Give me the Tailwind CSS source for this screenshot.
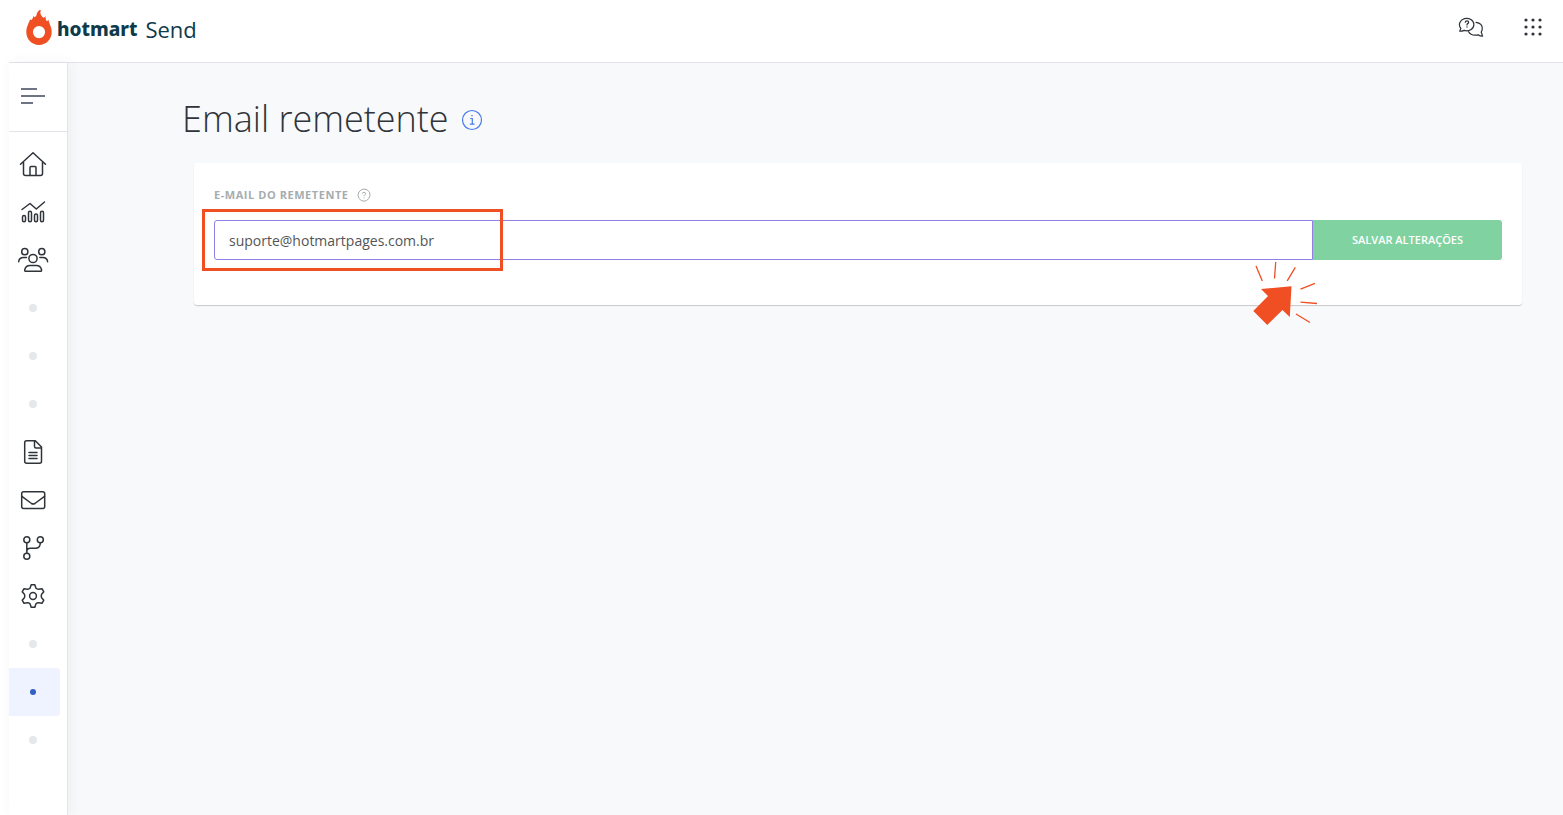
<!DOCTYPE html>
<html lang="pt-BR">
  <head>
    <meta charset="UTF-8" />
    <meta name="viewport" content="width=device-width, initial-scale=1.0" />
    <title>Hotmart Send - Email remetente</title>
    <script src="https://cdn.jsdelivr.net/npm/@tailwindcss/browser@4"></script>
  </head>

  <body class="min-h-screen flex flex-col pl-[9px] bg-white text-[#2f343a] font-['Open_Sans',sans-serif]">
    <!-- Header -->
    <header class="flex h-[63px] items-center justify-between border-b border-[#e3e4ea] pl-4 pr-5">
      <a href="#" class="flex items-center -mt-1 text-[#0e3a4a]" aria-label="hotmart Send">
        <svg class="w-7 h-9 -mt-1" viewBox="25 8 28 36" fill="none">
          <path fill="#f04e23" fill-rule="evenodd" d="M39.500 9C37.500 10.500 36.500 12.500 36.300 15L34.500 16.200L33.500 14.800C33.200 16.500 32.700 17.700 31.500 19L30 18.500C29.500 21 26.300 25.500 26.300 31C26.300 38 31.500 43.900 39 43.900C46.500 43.900 51.700 38 51.700 31C51.700 26 49.500 23.500 48.500 19L47 20.200C45.700 19 45.500 17.500 45.600 15.200L43.500 17C41 14.500 39.400 12 41 9.200ZM39 25A6.100 6.100 0 1 1 39 37.200A6.100 6.100 0 1 1 39 25Z" />
        </svg>
        <span class="ml-1 text-[19px] leading-7 font-extrabold font-['Noto_Sans',sans-serif]">hotmart</span>
        <span class="ml-2 text-[22px] leading-7 font-normal">Send</span>
      </a>
      <div class="flex items-center gap-[39px] -mt-2">
        <button type="button" aria-label="Ajuda">
          <svg class="w-[26px] h-6" viewBox="1458 15 26 24" fill="none" stroke="#2f343a" stroke-width="1.2" stroke-linejoin="round" stroke-linecap="round">
            <path d="M1459.700 31.200L1460.900 28.300A7.200 6.200 0 1 1 1464.200 30.400Q1462 31.400 1459.700 31.200Z" />
            <path d="M1476 22.300Q1482.500 23.300 1482.300 28.500Q1482.200 30.500 1481.200 32L1482.600 36.200Q1480 36.300 1478.200 34.800Q1471 36.300 1468.600 31.700" />
            <path d="M1465.300 22.100Q1465.500 20.800 1467 20.800T1468.600 22.300Q1468.600 23.200 1467.600 23.600Q1467 23.900 1467 24.900M1467 26.800V27" stroke-width="1.300" />
          </svg>
        </button>
        <button type="button" aria-label="Aplicativos">
          <svg class="w-5 h-5" viewBox="0 0 20 20" fill="#2f343a">
            <circle cx="3" cy="3" r="1.600" /><circle cx="10" cy="3" r="1.600" /><circle cx="17" cy="3" r="1.600" />
            <circle cx="3" cy="10" r="1.600" /><circle cx="10" cy="10" r="1.600" /><circle cx="17" cy="10" r="1.600" />
            <circle cx="3" cy="17" r="1.600" /><circle cx="10" cy="17" r="1.600" /><circle cx="17" cy="17" r="1.600" />
          </svg>
        </button>
      </div>
    </header>

    <div class="flex flex-1">
      <!-- Sidebar -->
      <aside class="relative w-[59px] shrink-0 border-r border-[#e3e4ea] bg-white shadow-[2px_0_12px_rgba(50,60,90,0.06)]">
        <button type="button" aria-label="Menu" class="flex w-full h-[69px] items-center border-b border-[#e3e4ea] pl-3 pb-[2px]">
          <svg class="w-6 h-4" viewBox="0 0 24 16" fill="#6f7482">
            <rect width="16" height="2" /><rect y="7" width="24" height="2" /><rect y="14" width="12" height="2" />
          </svg>
        </button>
        <nav class="flex flex-col pt-2 pr-[7px]">
          <a href="#" aria-label="Início" class="flex h-12 items-center justify-center pr-1">
            <svg class="w-8 h-8" viewBox="0 0 32 32" fill="none" stroke="#2f343a" stroke-width="1.500" stroke-linecap="round" stroke-linejoin="round">
              <path d="M3.500 16.200L16 4.800L28.500 16.200M6.500 13.800V25.500Q6.500 27.500 8.500 27.500H23.500Q25.500 27.500 25.500 25.500V13.800M13 27.300V19.500Q13 18.500 14 18.500H18Q19 18.500 19 19.500V27.300" />
            </svg>
          </a>
          <a href="#" aria-label="Relatórios" class="flex h-12 items-center justify-center pr-1">
            <svg class="w-8 h-8" viewBox="0 0 32 32" fill="none" stroke="#2f343a" stroke-width="1.500" stroke-linecap="round" stroke-linejoin="round">
              <path d="M5 13.500L13 7.500L19.300 13L27.500 6" />
              <rect x="5.500" y="19.500" width="3" height="6.300" rx="1.500" /><rect x="11.500" y="15.300" width="3" height="10.500" rx="1.500" />
              <rect x="17.500" y="18" width="3" height="7.800" rx="1.500" /><rect x="23.500" y="15.300" width="3" height="10.500" rx="1.500" />
            </svg>
          </a>
          <a href="#" aria-label="Contatos" class="flex h-12 items-center justify-center pr-1">
            <svg class="w-8 h-8" viewBox="0 0 32 32" fill="none" stroke="#2f343a" stroke-width="1.500" stroke-linecap="round" stroke-linejoin="round">
              <circle cx="7.800" cy="7.700" r="3.100" /><circle cx="24.800" cy="7.700" r="3.100" /><circle cx="16" cy="14.500" r="4.100" />
              <path d="M1.700 17.800Q2 13.500 6.500 13.500H9.500M22.800 13.500H25.800Q30.200 13.500 30.600 17.800M7.700 26Q8.500 21.500 13 21.500H19.300Q23.800 21.500 24.600 26Q24.700 27.300 23.500 27.300H8.800Q7.600 27.300 7.700 26Z" />
            </svg>
          </a>
          <a href="#" class="flex h-12 items-center justify-center pr-1" aria-label="Item"><span class="size-2 rounded-full bg-[#e5e8eb]"></span></a>
          <a href="#" class="flex h-12 items-center justify-center pr-1" aria-label="Item"><span class="size-2 rounded-full bg-[#e5e8eb]"></span></a>
          <a href="#" class="flex h-12 items-center justify-center pr-1" aria-label="Item"><span class="size-2 rounded-full bg-[#e5e8eb]"></span></a>
          <a href="#" aria-label="Formulários" class="flex h-12 items-center justify-center pr-1">
            <svg class="w-8 h-8" viewBox="0 0 32 32" fill="none" stroke="#2f343a" stroke-width="1.500" stroke-linecap="round" stroke-linejoin="round">
              <path d="M9.500 4.700H18.300L24.500 11V25.300Q24.500 27.300 22.500 27.300H9.700Q7.700 27.300 7.700 25.300V6.700Q7.700 4.700 9.500 4.700ZM17.500 4.900V10.500Q17.500 12 19 12H24.300M12 16.500H20M12 19.500H20M12 22.500H20" />
            </svg>
          </a>
          <a href="#" aria-label="E-mails" class="flex h-12 items-center justify-center pr-1">
            <svg class="w-8 h-8" viewBox="0 0 32 32" fill="none" stroke="#2f343a" stroke-width="1.500" stroke-linecap="round" stroke-linejoin="round">
              <rect x="4.700" y="7.700" width="23" height="16.800" rx="2" />
              <path d="M4.900 12.300L14.500 19.500Q16.200 20.600 17.900 19.500L27.500 12.300" />
            </svg>
          </a>
          <a href="#" aria-label="Automações" class="flex h-12 items-center justify-center pr-1">
            <svg class="w-8 h-8" viewBox="0 0 32 32" fill="none" stroke="#2f343a" stroke-width="1.500" stroke-linecap="round" stroke-linejoin="round">
              <circle cx="9.800" cy="7.700" r="3" /><circle cx="23.300" cy="7.700" r="3" /><circle cx="9.800" cy="24.200" r="3" />
              <path d="M9.800 10.700V21.200M9.800 19.800Q9.800 16.200 13.300 16.200H19Q23.300 15.800 23.300 10.700" />
            </svg>
          </a>
          <a href="#" aria-label="Configurações" class="flex h-12 items-center justify-center pr-1">
            <svg class="w-8 h-8" viewBox="0 0 32 32" fill="none" stroke="#2f343a" stroke-width="1.500" stroke-linecap="round" stroke-linejoin="round">
              <circle cx="16" cy="16" r="3.400" />
              <path d="M14.200 4.700H17.800L19 8.300Q20.300 9.400 21.600 9.200L25 8.700L26.800 11.800L24.600 14.300Q23.800 16 24.600 17.700L26.800 20.200L25 23.300L21.600 22.800Q20.300 22.600 19 23.700L17.800 27.300H14.200L13 23.700Q11.700 22.600 10.400 22.800L7 23.300L5.200 20.200L7.400 17.700Q8.200 16 7.400 14.300L5.200 11.800L7 8.700L10.400 9.200Q11.700 9.400 13 8.300Z" />
            </svg>
          </a>
          <a href="#" class="flex h-12 items-center justify-center pr-1" aria-label="Item"><span class="size-2 rounded-full bg-[#e5e8eb]"></span></a>
          <a href="#" class="flex h-12 items-center justify-center pr-1 rounded-r-[3px] bg-[#eff3ff]" aria-label="Email remetente" aria-current="page"><span class="size-[6px] rounded-full bg-[#3360c4]"></span></a>
          <a href="#" class="flex h-12 items-center justify-center pr-1" aria-label="Item"><span class="size-2 rounded-full bg-[#e5e8eb]"></span></a>
        </nav>
      </aside>

      <!-- Content -->
      <main class="flex-1 min-w-0 bg-[#f8f9fb] pl-[114px] pr-[41px] pt-8">
        <div class="flex items-center gap-3">
          <h1 class="text-[36px] leading-[48px] font-light">Email remetente</h1>
          <button type="button" aria-label="Informações" class="pt-[2px]">
            <svg class="w-[22px] h-[22px]" viewBox="0 0 22 22" fill="none" stroke="#4a7bea" stroke-width="1.200">
              <circle cx="11" cy="11" r="9.500" />
              <path d="M9.200 9.500H11.300V15M8.800 15.200H13.600M10.300 6.700H11.700" />
            </svg>
          </button>
        </div>

        <section class="relative ml-3 mt-5 h-[142px] rounded-[3px] bg-white px-5 pt-6 shadow-[0_1px_1px_rgba(0,0,0,0.2)]">
          <div class="flex items-center gap-2 h-4">
            <label for="email" class="text-[11px] leading-4 font-bold text-[#a5adaf] tracking-wider">E-MAIL DO REMETENTE</label>
            <svg class="w-[14px] h-[14px]" viewBox="0 0 14 14" fill="none" stroke="#a5adaf">
              <path d="M7 1L10.200 1.900L12.500 4.200L13 7.300L11.800 10.500L9.300 12.700L7 13.200L4.200 12.500L1.800 10.200L1 7L1.900 4L4.200 1.800Z" />
              <path d="M5.300 5.600Q5.500 4.300 7 4.300T8.700 5.700Q8.700 6.700 7.500 7.100Q7 7.400 7 8.200M7 9.500V10.300" />
            </svg>
          </div>
          <form class="mt-[17px] flex h-10">
            <input id="email" type="email" value="suporte@hotmartpages.com.br" class="flex-1 min-w-0 rounded-l-[3px] border border-[#917ee6] bg-white px-[14px] text-[14px] text-[#555555] outline-none" />
            <button type="button" class="w-[189px] rounded-r-[3px] bg-[#80d2a0] text-[11px] font-semibold text-white">SALVAR ALTERAÇÕES</button>
          </form>

          <!-- Highlight and pointer over the form -->
          <div class="absolute left-2 top-[46px] h-[62px] w-[301px] border-3 border-[#f04e23] pointer-events-none"></div>
          <svg class="absolute right-[202px] top-[97px] w-[70px] h-[66px] pointer-events-none" viewBox="1250 260 70 66" fill="none" stroke="#f04e23" stroke-width="1.300">
            <path fill="#f04e23" stroke="none" d="M1261 289L1291.500 286.300L1289.800 317L1282.500 310L1267.300 325L1253.300 311L1268 296Z" />
            <path d="M1256 266L1262.300 281M1275.700 262L1274.500 278.500M1295.300 267.300L1287.200 280.800M1300.500 289.200L1315 283.300M1300.500 302.200L1317 303.500M1296 314L1310 322.500" />
          </svg>
        </section>
      </main>
    </div>
  </body>
</html>
